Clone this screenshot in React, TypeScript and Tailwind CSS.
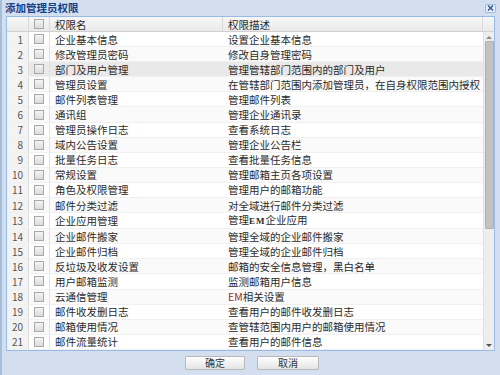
import React from "react";

type Perm = { name: string; desc: React.ReactNode };

const perms: Perm[] = [
  { name: "企业基本信息", desc: "设置企业基本信息" },
  { name: "修改管理员密码", desc: "修改自身管理密码" },
  { name: "部门及用户管理", desc: "管理管辖部门范围内的部门及用户" },
  { name: "管理员设置", desc: "在管辖部门范围内添加管理员，在自身权限范围内授权" },
  { name: "邮件列表管理", desc: "管理邮件列表" },
  { name: "通讯组", desc: "管理企业通讯录" },
  { name: "管理员操作日志", desc: "查看系统日志" },
  { name: "域内公告设置", desc: "管理企业公告栏" },
  { name: "批量任务日志", desc: "查看批量任务信息" },
  { name: "常规设置", desc: "管理邮箱主页各项设置" },
  { name: "角色及权限管理", desc: "管理用户的邮箱功能" },
  { name: "邮件分类过滤", desc: "对全域进行邮件分类过滤" },
  {
    name: "企业应用管理",
    desc: (
      <>
        管理
        <span className="font-bold tracking-[1px] text-[9px] font-['Liberation_Serif',serif]">EM</span>
        企业应用
      </>
    ),
  },
  { name: "企业邮件搬家", desc: "管理全域的企业邮件搬家" },
  { name: "企业邮件归档", desc: "管理全域的企业邮件归档" },
  { name: "反垃圾及收发设置", desc: "邮箱的安全信息管理，黑白名单" },
  { name: "用户邮箱监测", desc: "监测邮箱用户信息" },
  {
    name: "云通信管理",
    desc: (
      <>
        <span className="text-[#9b2a2a]">EM</span>相关设置
      </>
    ),
  },
  { name: "邮件收发删日志", desc: "查看用户的邮件收发删日志" },
  { name: "邮箱使用情况", desc: "查管辖范围内用户的邮箱使用情况" },
  { name: "邮件流量统计", desc: "查看用户的邮件信息" },
];

function Checkbox() {
  return <div className="w-[10px] h-[10px] border border-[#a8a8a8] bg-gradient-to-b from-[#f4f4f4] to-[#dcdcdc]" />;
}

export default function App() {
  return (
    <div className="w-[500px] h-[375px] bg-[#d3dfee] border-l-2 border-[#a6bed9] overflow-hidden text-[#2a2a2a] font-['Noto_Sans_CJK_SC',sans-serif] text-[10.5px]">
      {/* title */}
      <div className="h-[16px] flex items-center justify-between pl-[3px] pr-[4px]">
        <span className="font-bold text-[#15428b] text-[10.5px] leading-[14px]">添加管理员权限</span>
        <div className="w-[11px] h-[9px] border border-[#99bbe8] bg-[#e8f0fb] rounded-[1px] flex items-center justify-center">
          <svg width="7" height="6" viewBox="0 0 7 6">
            <path d="M1 0.5 L6 5.5 M6 0.5 L1 5.5" stroke="#3a5f9c" strokeWidth="1.6" />
          </svg>
        </div>
      </div>

      {/* grid */}
      <div className="ml-[4px] w-[489px] h-[335px] border border-[#99bbe8] bg-white flex flex-col">
        <div className="h-[15px] flex bg-gradient-to-b from-[#f7f7f7] to-[#eaeaea] border-b border-[#d0d0d0] leading-[13px]">
          <div className="w-[22px] border-r border-[#d8d8d8]" />
          <div className="w-[21px] border-r border-[#d8d8d8] flex items-center justify-center">
            <Checkbox />
          </div>
          <div className="w-[173px] border-r border-[#d8d8d8] flex items-center pl-[5px]">权限名</div>
          <div className="w-[260px] border-r border-[#d8d8d8] flex items-center pl-[5px]">权限描述</div>
          <div className="flex-1" />
        </div>
        <div className="flex flex-1 min-h-0">
          <div className="flex-1 flex flex-col">
            {perms.map((p, i) => (
              <div
                key={i}
                className={`flex-1 flex items-center leading-[13px] border-b border-[#f0f0f0] ${
                  i === 2 ? "bg-[#e9e9e9]" : i % 2 === 1 ? "bg-[#fafafa]" : "bg-white"
                }`}
              >
                <div className="w-[22px] self-stretch bg-[#f3f3f3] border-r border-[#dcdcdc] flex items-center justify-end pr-[5px] text-[#555] text-[10px]">
                  {i + 1}
                </div>
                <div className="w-[21px] self-stretch border-r border-[#e2e2e2] flex items-center justify-center">
                  <Checkbox />
                </div>
                <div className="w-[173px] pl-[5px] whitespace-nowrap">{p.name}</div>
                <div className="pl-[5px] whitespace-nowrap">{p.desc}</div>
              </div>
            ))}
          </div>
          {/* scrollbar */}
          <div className="w-[11px] bg-[#eeeeee] border-l border-[#e0e0e0] flex flex-col items-center">
            <div className="h-[9px] flex items-center justify-center">
              <svg width="6" height="4" viewBox="0 0 6 4">
                <path d="M0 4 L3 1 L6 4 Z" fill="#8a8a8a" />
              </svg>
            </div>
            <div className="w-[9px] h-[188px] bg-[#c2c2c2] border border-[#b0b0b0] rounded-[1px]" />
            <div className="flex-1" />
            <div className="h-[9px] flex items-center justify-center">
              <svg width="6" height="4" viewBox="0 0 6 4">
                <path d="M0 0 L6 0 L3 3 Z" fill="#555" />
              </svg>
            </div>
          </div>
        </div>
      </div>

      {/* buttons */}
      <div className="flex justify-center gap-[12px] pt-[5px] pl-[2px]">
        <button className="w-[60px] h-[14px] border border-[#b8b8b8] rounded-[2px] bg-gradient-to-b from-[#ffffff] to-[#e4e4e4] text-[10px] leading-[12px] text-[#333]">
          确定
        </button>
        <button className="w-[62px] h-[14px] border border-[#b8b8b8] rounded-[2px] bg-gradient-to-b from-[#ffffff] to-[#e4e4e4] text-[10px] leading-[12px] text-[#333]">
          取消
        </button>
      </div>
    </div>
  );
}
